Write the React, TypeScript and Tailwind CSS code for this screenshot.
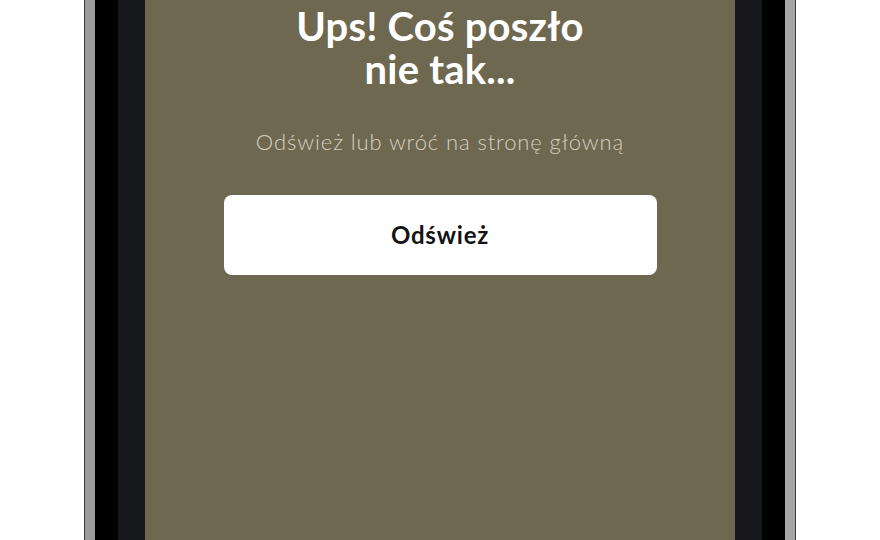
export default function App() {
  return (
    <div className="h-[540px] w-[880px] overflow-hidden bg-white flex" style={{ fontFamily: "Lato, 'Noto Sans', sans-serif" }}>
      <div className="ml-[84px] h-full flex border-x border-[#3a3a3a] px-[10px] bg-[linear-gradient(90deg,#9a9a9a_0%,#cfcfcf_40%,#a6a6a6_100%)]">
        <div className="h-full flex bg-black px-[23px]">
          <div className="h-full flex bg-[#17181b] px-[27px]">
            <main className="h-full w-[590px] bg-[#6f6850] flex flex-col items-center pt-[5px]">
              <h1 className="text-white font-bold text-[40px] leading-[43px] text-center tracking-[0.2px]">
                <span className="block">Ups! Coś poszło</span>
                <span className="block">nie tak...</span>
              </h1>
              <p className="mt-[37px] text-[22px] leading-[28px] font-light tracking-[0.9px] text-[#d4cfc1] text-center">
                Odśwież lub wróć na stronę główną
              </p>
              <button className="mt-[39px] w-[433px] h-[80px] rounded-[8px] bg-white text-[#141414] font-bold text-[24px] tracking-[0.8px]">
                Odśwież
              </button>
            </main>
          </div>
        </div>
      </div>
    </div>
  );
}
